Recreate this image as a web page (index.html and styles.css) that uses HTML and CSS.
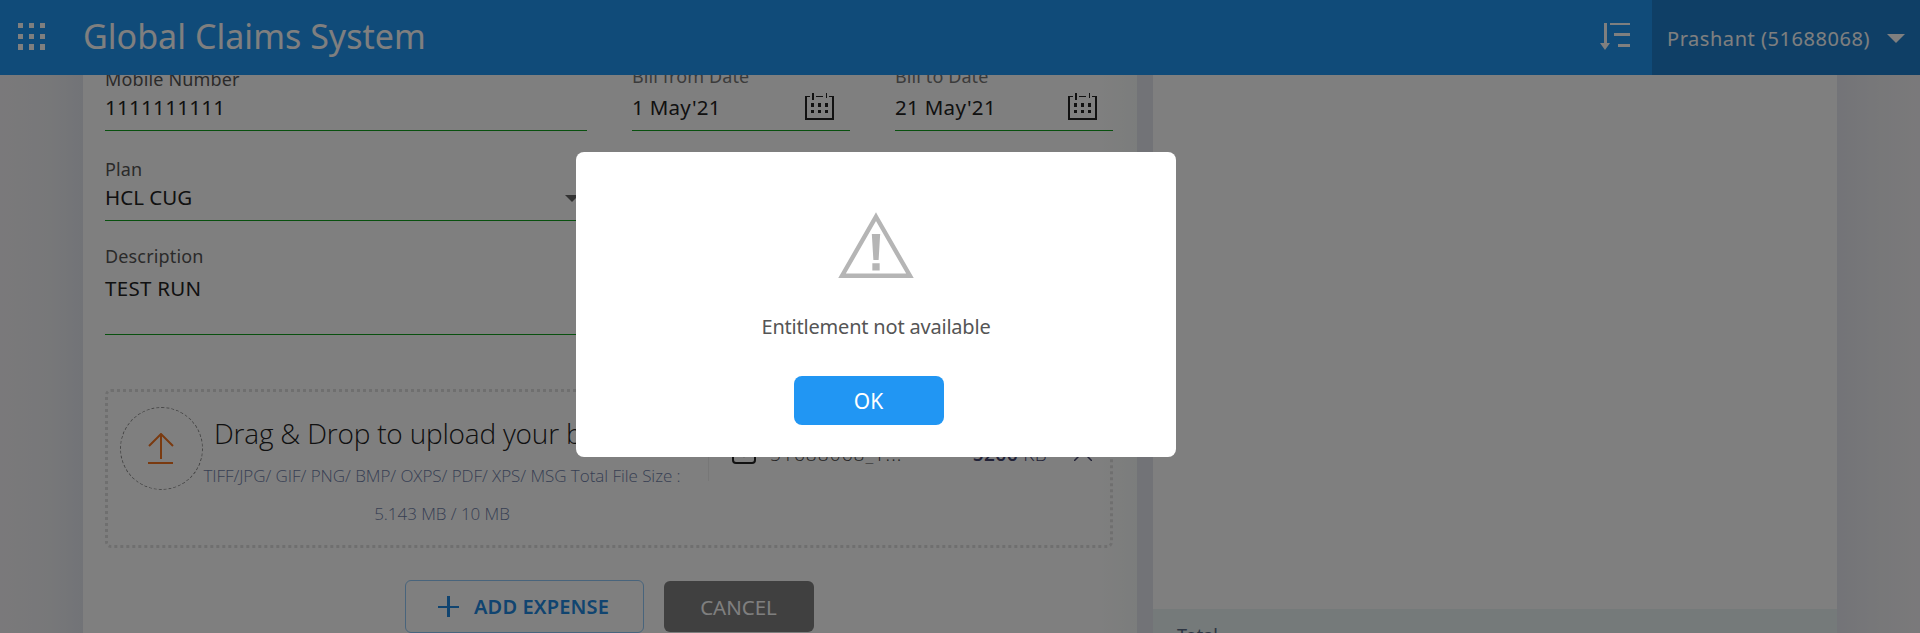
FILE: index.html
```html
<!DOCTYPE html>
<html lang="en">
<head>
<meta charset="utf-8">
<title>Global Claims System</title>
<link rel="stylesheet" href="styles.css">
</head>
<body>
<header class="topbar">
  <svg class="apps" width="28" height="28" viewBox="0 0 28 28" fill="#fff" shape-rendering="crispEdges"><path d="M0 0h5v5H0zM11 0h5v5h-5zM22 0h5v5h-5zM0 11h5v5H0zM11 11h5v5h-5zM22 11h5v5h-5zM0 21h5v6H0zM11 21h5v6h-5zM22 21h5v6h-5z"/></svg>
  <h1 class="title">Global Claims System</h1>
  <svg class="sort" width="30" height="28" viewBox="0 0 30 28" fill="#fff"><path d="M4 0h3v20h3l-5 7-5-7h4zM10 0h20v2H10zM14 10h16v3H14zM18 21h12v3H18z"/></svg>
  <div class="user"><span class="user-name">Prashant (51688068)</span><svg width="18" height="9" viewBox="0 0 18 9" fill="#fff"><path d="M0 0h18L9 9z"/></svg></div>
</header>
<main class="page">
  <section class="form">
    <div class="row">
      <div class="field wide"><label class="label mobile"><span>Mobile Number</span></label><div class="value"><span class="ones">1111111111</span></div></div>
      <div class="field date"><label class="label faint"><span>Bill from Date</span></label><div class="value"><span class="from">1 May'21</span>
        <svg class="cal" width="29" height="27" viewBox="0 0 29 27" fill="#222" shape-rendering="crispEdges"><path d="M0 3h5v1H2v21h25V4h-3V3h5v24H0zM7 0h2v7H7zM21 0h1v5h-1zM11 3h7v1h-7zM6 10h3v4H6zM13 10h3v4h-3zM20 10h3v4h-3zM6 17h3v3H6zM13 17h3v3h-3zM20 17h3v3h-3z"/></svg></div></div>
      <div class="field date"><label class="label faint"><span>Bill to Date</span></label><div class="value"><span class="to">21 May'21</span>
        <svg class="cal" width="29" height="27" viewBox="0 0 29 27" fill="#222" shape-rendering="crispEdges"><path d="M0 3h5v1H2v21h25V4h-3V3h5v24H0zM7 0h2v7H7zM21 0h1v5h-1zM11 3h7v1h-7zM6 10h3v4H6zM13 10h3v4h-3zM20 10h3v4h-3zM6 17h3v3H6zM13 17h3v3h-3zM20 17h3v3h-3z"/></svg></div></div>
    </div>
    <div class="field wide plan"><label class="label"><span>Plan</span></label><div class="value"><span class="cug">HCL CUG</span><svg class="caret" width="14" height="7" viewBox="0 0 14 7" fill="#666"><path d="M0 0h14L7 7z"/></svg></div></div>
    <div class="field desc"><label class="label"><span class="dl">Description</span></label><div class="value"><span class="run">TEST RUN</span></div></div>
    <div class="upload">
      <div class="circle"><svg width="26" height="32" viewBox="0 0 26 32" fill="none" stroke="#f47521" stroke-width="2"><path d="M13 26V2M1 13L13 1l12 12M0 30h25"/></svg></div>
      <div class="drop"><div class="drop-title">Drag &amp; Drop to upload your bill</div><div class="types">TIFF/JPG/ GIF/ PNG/ BMP/ OXPS/ PDF/ XPS/ MSG Total File Size :</div><div class="size">5.143 MB / 10 MB</div></div>
      <div class="file">
        <svg width="24" height="26" viewBox="0 0 24 26" fill="none" stroke="#222" stroke-width="2"><path d="M1 10v12q0 3 3 3h16q3 0 3-3V10M12 1v17M8 14l4 4 4-4"/></svg>
        <span class="file-name">51688068_T...</span><span class="file-size"><b>5266</b> KB</span>
        <svg class="remove" width="18" height="18" viewBox="0 0 18 18" fill="none" stroke="#44446e" stroke-width="1.5"><path d="M0 0l18 18M18 0L0 18"/></svg>
      </div>
    </div>
    <div class="actions">
      <button class="add"><svg width="21" height="21" viewBox="0 0 21 21" fill="none" stroke="#2088e0" stroke-width="3"><path d="M10.500 0v21" /><path d="M0 11h21" stroke-width="2"/></svg><span>ADD EXPENSE</span></button>
      <button class="cancel"><span>CANCEL</span></button>
    </div>
  </section>
  <aside class="side"><div class="total">Total</div></aside>
</main>
<div class="overlay">
  <div class="modal" role="alertdialog">
    <svg class="warn" width="80" height="70" viewBox="0 0 76 67"><path d="M38 5.500L70.500 62H5.500z" fill="none" stroke="#b5b5b5" stroke-width="4.200"/><path d="M34 22h8l-1.500 25h-5zM34.500 50h7v7h-7z" fill="#b5b5b5"/></svg>
    <p class="message">Entitlement not available</p>
    <button class="ok">OK</button>
  </div>
</div>
</body>
</html>
```
FILE: styles.css
```css
* { box-sizing: border-box; }
body { margin: 0; width: 1920px; height: 633px; overflow: hidden; font-family: "Noto Sans", "Open Sans", sans-serif; color: #222; background: #f6f2f8; }
svg { display: block; flex: none; }
button { font-family: inherit; padding: 0; margin: 0; }
.topbar { height: 75px; display: flex; align-items: flex-start; background: #2196f3; color: #fff; position: relative; z-index: 1; }
.apps { margin: 23px 0 0 18px; }
.title { margin: 13px 0 0 37px; font-size: 34px; line-height: 46px; font-weight: 400; letter-spacing: .03px; white-space: nowrap; }
.sort { margin: 23px 22px 0 auto; }
.user { width: 268px; height: 75px; padding: 1px 15px 0 15px; background: #1e7ecc; display: flex; align-items: center; justify-content: space-between; font-size: 20px; letter-spacing: .55px; white-space: nowrap; }
.page { height: 558px; display: flex; gap: 16px; padding: 0 83px; background: linear-gradient(90deg, #f5f3f6 0, #eff0f3 50px, #e4e7ef 83px, #e5e6ee 1153px, #e7e8f0 1837px, #f0f0f3 1880px, #f5f3f6 1920px); }
.form { width: 1054px; padding: 0 24px 0 22px; background: linear-gradient(90deg, #fff 0, #fff 96%, #f7faf9 100%); }
.row { display: flex; gap: 45px; margin-top: -12px; }
.row .field { height: 68px; }
.field { height: 66px; border-bottom: 1px solid #10a01c; }
.wide { width: 482px; }
.date { width: 218px; }
.label { display: block; height: 28px; font-size: 18px; line-height: 28px; color: #555; white-space: nowrap; letter-spacing: .15px; }
.row .label { height: 30px; }
.mobile { padding-top: 2px; }
.faint { color: #777; line-height: 26px; letter-spacing: .1px; }
.value { height: 37px; display: flex; justify-content: space-between; font-size: 20.500px; line-height: 29px; white-space: nowrap; }
.ones, .from, .to, .run { letter-spacing: .3px; }
.cal { margin: 0 16px 0 0; }
.plan { margin-top: 24px; }
.caret { margin: 12px 8px 0 0; }
.desc { height: 93px; width: 1008px; margin-top: 21px; }
.desc .value { padding-top: 4px; }
.upload { height: 159px; margin-top: 54px; border: 3px dotted #dedede; border-radius: 6px; display: flex; }
.circle { width: 83px; height: 83px; margin: 15px 0 0 12px; padding-right: 1px; border: 1px dashed #888; border-radius: 50%; display: flex; align-items: center; justify-content: center; flex: none; }
.drop { width: 478px; text-align: center; white-space: nowrap; font-family: "Open Sans", sans-serif; font-weight: 300; padding-top: 18px; }
.drop-title { font-size: 28px; line-height: 46px; text-align: left; padding-left: 11px; letter-spacing: -.2px; }
.types, .size { font-size: 17px; line-height: 38px; color: #6f7fa8; letter-spacing: -.05px; }
.types { margin-top: 1px; }
.file { height: 74px; width: 401px; border-left: 1px solid #eee; margin: 15px 0 0 27px; padding: 31px 17px 0 23px; display: flex; font-family: "Open Sans", sans-serif; font-weight: 300; font-size: 19px; line-height: 32px; white-space: nowrap; color: #444; }
.file-name { margin-left: 14px; letter-spacing: 1.1px; }
.file-size { margin-left: auto; color: #44446e; letter-spacing: .4px; }
.file-size b { font-weight: 600; }
.remove { margin: 5px 0 0 27px; }
.actions { display: flex; gap: 20px; padding: 32px 0 0 300px; }
.add { width: 239px; height: 53px; display: flex; align-items: center; gap: 15px; padding: 0 0 0 32px; border: 1px solid #90c8f8; border-radius: 6px; background: transparent; color: #2088e0; font-size: 20px; font-weight: 600; letter-spacing: .15px; white-space: nowrap; }
.cancel { width: 150px; height: 51px; margin-top: 1px; border: 0; border-radius: 6px; background: #808080; color: #fff; font-size: 20.500px; padding-right: 1px; }
.side { width: 684px; background: #fff; padding-top: 534px; }
.total { height: 24px; padding: 13px 0 0 24px; background: #eaf5f5; color: #5a6a84; font-size: 18px; line-height: 26px; }
.overlay { position: absolute; z-index: 2; inset: 0; background: rgba(0,0,0,.5); padding: 152px 0 0 576px; }
.modal { width: 600px; height: 305px; border-radius: 8px; background: #fff; display: flex; flex-direction: column; align-items: center; padding-top: 59px; }
.message { margin: 32px 0 0; font-size: 20px; line-height: 28px; letter-spacing: -.2px; color: #555; white-space: nowrap; }
.ok { width: 150px; height: 49px; margin: 35px 14px 0 0; border: 0; border-radius: 8px; background: #2196f3; color: #fff; font-size: 21px; padding-right: 1px; }
```
